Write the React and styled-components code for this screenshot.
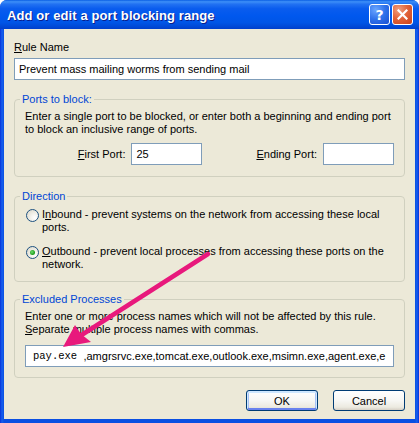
import React from "react";
import styled, { createGlobalStyle, css } from "styled-components";

const GlobalStyle = createGlobalStyle`
  html, body {
    margin: 0;
    padding: 0;
    background: #ffffff;
  }
  body {
    font-family: "Liberation Sans", Arial, sans-serif;
    font-size: 11px;
    color: #000;
  }
`;

const Window = styled.div`
  position: relative;
  width: 419px;
  height: 423px;
  display: flex;
  flex-direction: column;
  border-radius: 7px 7px 0 0;
  overflow: hidden;
  background: linear-gradient(to right, #0831d9 0px, #1660ee 2px, #0a4fe2 4px, #0a4fe2 calc(100% - 4px), #1660ee calc(100% - 2px), #0831d9 100%);
`;

const TitleBar = styled.div`
  height: 29px;
  flex-shrink: 0;
  display: flex;
  align-items: center;
  padding: 0 6px 0 7px;
  box-sizing: border-box;
  background: linear-gradient(
    to bottom,
    #0a5ee4 0%,
    #3d8ff8 6%,
    #2272f2 14%,
    #0a5cee 30%,
    #0058ee 55%,
    #0055e6 78%,
    #004ad8 90%,
    #003fcb 100%
  );
`;

const Title = styled.div`
  flex: 1;
  color: #fff;
  font-family: "Liberation Sans", Arial, sans-serif;
  font-weight: bold;
  font-size: 13px;
  letter-spacing: 0.1px;
  text-shadow: 1px 1px 0 #0a1e8c;
  padding-top: 1px;
`;

const CaptionButton = styled.div`
  width: 21px;
  height: 21px;
  box-sizing: border-box;
  margin-left: 2px;
  border: 1px solid #fff;
  border-radius: 3px;
  display: flex;
  align-items: center;
  justify-content: center;
  color: #fff;
  font-family: "DejaVu Sans", sans-serif;
  font-weight: bold;
  font-size: 14px;
  ${(p) =>
    p.$variant === "close"
      ? css`
          background: radial-gradient(circle at 30% 25%, #f0a080 0%, #e2643a 45%, #c8401a 100%);
        `
      : css`
          background: radial-gradient(circle at 30% 25%, #6aa6ff 0%, #2f71ea 50%, #1a50d2 100%);
        `}
`;

const Client = styled.div`
  flex: 1;
  margin: 0 4px 4px;
  background: #ece9d8;
  padding: 12px 10px 6px;
  display: flex;
  flex-direction: column;
`;

const FieldLabel = styled.div`
  line-height: 13px;
`;

const TextBox = styled.div`
  height: 22px;
  box-sizing: border-box;
  border: 1px solid #7f9db9;
  background: #fff;
  padding: 0 4px;
  display: flex;
  align-items: center;
  white-space: nowrap;
  overflow: hidden;
  margin-top: ${(p) => p.$top || 0}px;
  width: ${(p) => (p.$width ? `${p.$width}px` : "auto")};
`;

const ProcessBox = styled(TextBox)`
  padding-left: 7px;
`;

const Group = styled.fieldset`
  margin: ${(p) => p.$top}px 0 0;
  padding: 4px 10px ${(p) => p.$bottom}px;
  border: 1px solid #d0d0bf;
  border-radius: 4px;
  min-width: 0;
`;

const Legend = styled.legend`
  color: #0046d5;
  padding: 0 2px;
  margin-left: -5px;
  line-height: 14px;
`;

const Text = styled.p`
  margin: 0;
  line-height: 13px;
  white-space: nowrap;
`;

const PortRow = styled.div`
  display: flex;
  justify-content: flex-end;
  align-items: center;
  gap: 54px;
  margin-top: 7px;
`;

const PortPair = styled.div`
  display: flex;
  align-items: center;
  gap: 6px;
`;

const RadioList = styled.div`
  display: flex;
  flex-direction: column;
  gap: 11px;
  padding-left: 1px;
  padding-top: 1px;
`;

const RadioOption = styled.label`
  display: flex;
  align-items: flex-start;
  gap: 3px;
  line-height: 13px;
  white-space: nowrap;
`;

const RadioDot = styled.span`
  position: relative;
  width: 13px;
  height: 13px;
  box-sizing: border-box;
  flex-shrink: 0;
  margin-top: 1px;
  border-radius: 50%;
  border: 1px solid #1c5180;
  background: radial-gradient(circle at 70% 70%, #ffffff 0%, #f3f2ec 35%, #d8d5c6 100%);

  ${(p) =>
    p.$checked &&
    css`
      &::after {
        content: "";
        position: absolute;
        left: 3px;
        top: 3px;
        width: 5px;
        height: 5px;
        border-radius: 50%;
        background: radial-gradient(circle at 40% 40%, #6fdc6f 0%, #21a121 60%, #1b8a1b 100%);
      }
    `}
`;

const Mono = styled.span`
  font-family: "Liberation Mono", "Courier New", monospace;
  font-size: 10.5px;
  white-space: pre;
`;

const ButtonRow = styled.div`
  display: flex;
  justify-content: flex-end;
  gap: 15px;
  margin-top: 12px;
`;

const PushButton = styled.button`
  width: 72px;
  height: 21px;
  box-sizing: border-box;
  padding: 0;
  border: 1px solid #003c74;
  border-radius: 3px;
  font-family: "Liberation Sans", Arial, sans-serif;
  font-size: 11px;
  color: #000;
  background: linear-gradient(to bottom, #ffffff 0%, #f7f7f4 50%, #eceae0 85%, #d6d0c5 100%);
  ${(p) =>
    p.$default &&
    css`
      box-shadow: inset 0 1px 0 1px #cee7ff, inset 0 -1px 0 1px #6982ee, inset 1px 0 0 1px #a8c2f5,
        inset -1px 0 0 1px #a8c2f5;
    `}
`;

const Overlay = styled.svg`
  position: absolute;
  left: 0;
  top: 0;
  pointer-events: none;
`;

export default function App() {
  return (
    <>
      <GlobalStyle />
      <Window>
        <TitleBar>
          <Title>Add or edit a port blocking range</Title>
          <CaptionButton $variant="help">?</CaptionButton>
          <CaptionButton $variant="close">
            <svg width="11" height="11" viewBox="0 0 11 11">
              <path d="M1.5 1.5 L9.5 9.5 M9.5 1.5 L1.5 9.5" stroke="#fff" strokeWidth="2.2" strokeLinecap="square" />
            </svg>
          </CaptionButton>
        </TitleBar>

        <Client>
          <FieldLabel>
            <u>R</u>ule Name
          </FieldLabel>
          <TextBox $top={4}>Prevent mass mailing worms from sending mail</TextBox>

          <Group $top={12} $bottom={11}>
            <Legend>Ports to block:</Legend>
            <Text>
              Enter a single port to be blocked, or enter both a beginning and ending port
              <br />
              to block an inclusive range of ports.
            </Text>
            <PortRow>
              <PortPair>
                <span>
                  <u>F</u>irst Port:
                </span>
                <TextBox $width={71}>25</TextBox>
              </PortPair>
              <PortPair>
                <span>
                  <u>E</u>nding Port:
                </span>
                <TextBox $width={71} />
              </PortPair>
            </PortRow>
          </Group>

          <Group $top={12} $bottom={10}>
            <Legend>Direction</Legend>
            <RadioList>
              <RadioOption>
                <RadioDot />
                <span>
                  I<u>n</u>bound - prevent systems on the network from accessing these local
                  <br />
                  ports.
                </span>
              </RadioOption>
              <RadioOption>
                <RadioDot $checked />
                <span>
                  <u>O</u>utbound - prevent local processes from accessing these ports on the
                  <br />
                  network.
                </span>
              </RadioOption>
            </RadioList>
          </Group>

          <Group $top={10} $bottom={10}>
            <Legend>Excluded Processes</Legend>
            <Text>
              Enter one or more process names which will not be affected by this rule.
              <br />
              <u>S</u>eparate multiple process names with commas.
            </Text>
            <ProcessBox $top={9}>
              <Mono>pay.exe </Mono>,amgrsrvc.exe,tomcat.exe,outlook.exe,msimn.exe,agent.exe,e
            </ProcessBox>
          </Group>

          <ButtonRow>
            <PushButton $default>OK</PushButton>
            <PushButton>Cancel</PushButton>
          </ButtonRow>
        </Client>

        {/* annotation arrow drawn over the dialog */}
        <Overlay width="419" height="423" viewBox="0 0 419 423">
          <line x1="208" y1="254" x2="80" y2="336" stroke="#e8197c" strokeWidth="4.5" strokeLinecap="round" />
          <polygon points="63,347 75,325 81,334 91,342" fill="#e8197c" />
        </Overlay>
      </Window>
    </>
  );
}
